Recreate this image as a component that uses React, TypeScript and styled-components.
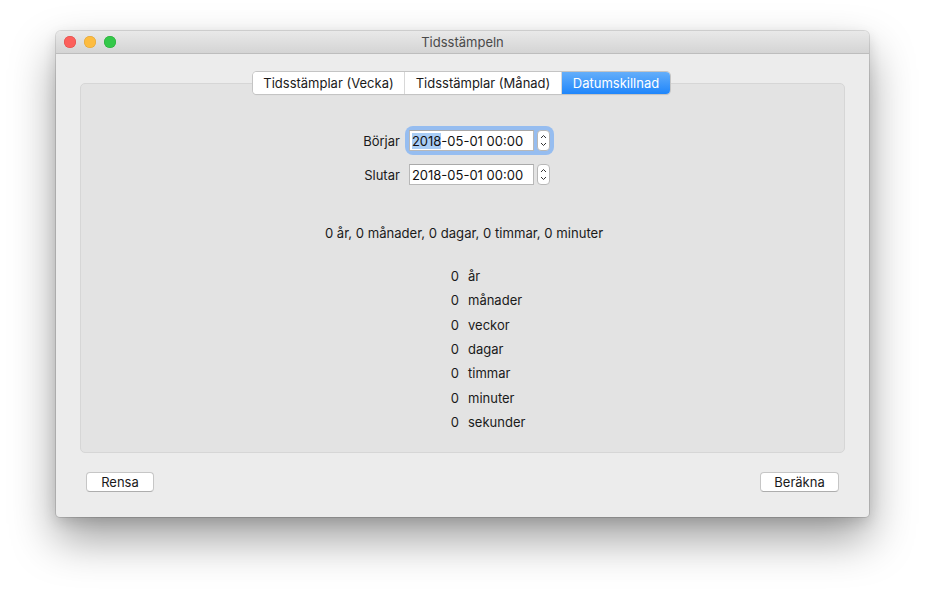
import React from "react";
import styled, { createGlobalStyle } from "styled-components";

const Global = createGlobalStyle`
  html, body { margin: 0; padding: 0; background: #ffffff; }
  body { font-family: Inter, "Liberation Sans", Arial, sans-serif; -webkit-font-smoothing: antialiased; }
  * { box-sizing: border-box; }
`;

const Page = styled.div`
  width: 925px;
  height: 597px;
  padding: 31px 0 0 56px;
  overflow: hidden;
`;

const Window = styled.div`
  width: 813px;
  height: 486px;
  background: #ececec;
  border-radius: 5px 5px 4px 4px;
  box-shadow: 0 0 0 1px rgba(0,0,0,0.12), 0 22px 45px rgba(0,0,0,0.38), 0 5px 14px rgba(0,0,0,0.12);
  display: flex;
  flex-direction: column;
  overflow: hidden;
`;

const TitleBar = styled.div`
  height: 23px;
  flex: none;
  position: relative;
  display: flex;
  align-items: center;
  justify-content: center;
  background: linear-gradient(#e9e9e9, #d4d4d4);
  border-bottom: 1px solid #bdbdbd;
`;

const Lights = styled.div`
  position: absolute;
  left: 8px;
  top: 5px;
  display: flex;
  gap: 8px;
`;

const Light = styled.span<{ $c: string; $b: string }>`
  width: 12px;
  height: 12px;
  border-radius: 50%;
  background: ${(p) => p.$c};
  box-shadow: inset 0 0 0 0.5px ${(p) => p.$b};
`;

const Title = styled.div`
  font-size: 13px;
  color: #4a4a4a;
`;

const Body = styled.div`
  flex: 1;
  display: flex;
  flex-direction: column;
  padding: 18px 24px 0 24px;
`;

const TabBar = styled.div`
  display: flex;
  justify-content: center;
  margin-bottom: -11px;
  position: relative;
  z-index: 1;
  padding-right: 2px;
`;

const Segmented = styled.div`
  display: flex;
  height: 22px;
  border-radius: 4px;
  background: #fff;
  box-shadow: 0 0 0 1px #c4c4c4, 0 1px 1px rgba(0,0,0,0.12);
  overflow: hidden;
`;

const Segment = styled.div<{ $active?: boolean; $w: number }>`
  width: ${(p) => p.$w}px;
  display: flex;
  align-items: center;
  justify-content: center;
  font-size: 13px;
  color: ${(p) => (p.$active ? "#fff" : "#1a1a1a")};
  background: ${(p) => (p.$active ? "linear-gradient(#64aefa, #1f86fb)" : "#fff")};
  & + & { border-left: 1px solid #d8d8d8; }
`;

const Panel = styled.div`
  height: 370px;
  background: #e3e3e3;
  border: 1px solid #d6d6d6;
  border-radius: 5px;
  display: flex;
  flex-direction: column;
  align-items: stretch;
  padding-top: 46px;
`;

const FormWrap = styled.div`
  display: flex;
  justify-content: center;
  padding-right: 12px;
`;

const Form = styled.div`
  display: grid;
  grid-template-columns: auto auto;
  column-gap: 9px;
  row-gap: 13px;
  align-items: center;
`;

const Label = styled.div`
  font-size: 13px;
  color: #1a1a1a;
  text-align: right;
`;

const Picker = styled.div<{ $focus?: boolean }>`
  display: flex;
  gap: 3px;
  border-radius: 4px;
  box-shadow: ${(p) => (p.$focus ? "0 0 0 4px #96bdf0" : "none")};
  background: ${(p) => (p.$focus ? "#96bdf0" : "transparent")};
`;

const Field = styled.div`
  width: 125px;
  height: 21px;
  background: #fff;
  border: 1px solid #b8b8b8;
  border-top-color: #a9a9a9;
  display: flex;
  align-items: center;
  padding-left: 2px;
  font-size: 13px;
  color: #111;
  white-space: nowrap;
`;

const Sel = styled.span`
  background: #a9cdf5;
`;

const Stepper = styled.div`
  width: 13px;
  height: 21px;
  background: #fff;
  border: 1px solid #b8b8b8;
  border-radius: 4px;
  display: flex;
  align-items: center;
  justify-content: center;
`;

const Summary = styled.div`
  margin-top: 40px;
  text-align: center;
  font-size: 13.1px;
  color: #1a1a1a;
  padding-left: 3px;
`;

const List = styled.div`
  margin-top: 23px;
  padding-left: 2px;
  display: grid;
  grid-template-columns: 1fr 1fr;
  column-gap: 9px;
  grid-auto-rows: 24.3px;
  align-items: center;
  font-size: 13px;
  color: #1a1a1a;
`;

const Num = styled.div`
  text-align: right;
`;

const Unit = styled.div`
  text-align: left;
`;

const Footer = styled.div`
  display: flex;
  justify-content: space-between;
  padding: 19px 6px 0 6px;
`;

const Button = styled.div<{ $w: number }>`
  width: ${(p) => p.$w}px;
  height: 20px;
  background: #fff;
  border: 1px solid #c6c6c6;
  border-bottom-color: #adadad;
  border-radius: 4px;
  display: flex;
  align-items: center;
  justify-content: center;
  font-size: 13px;
  color: #1a1a1a;
`;

const StepIcon = () => (
  <svg width="7" height="15" viewBox="0 0 7 15">
    <path d="M1 5 L3.5 2.5 L6 5" fill="none" stroke="#333" strokeWidth="1" />
    <path d="M1 10 L3.5 12.5 L6 10" fill="none" stroke="#333" strokeWidth="1" />
  </svg>
);

const units = ["år", "månader", "veckor", "dagar", "timmar", "minuter", "sekunder"];

export default function App() {
  return (
    <>
      <Global />
      <Page>
        <Window>
          <TitleBar>
            <Lights>
              <Light $c="#fc605c" $b="#de4a45" />
              <Light $c="#fdbc40" $b="#dea236" />
              <Light $c="#34c84a" $b="#27aa35" />
            </Lights>
            <Title>Tidsstämpeln</Title>
          </TitleBar>
          <Body>
            <TabBar>
              <Segmented>
                <Segment $w={151}>Tidsstämplar (Vecka)</Segment>
                <Segment $w={157}>Tidsstämplar (Månad)</Segment>
                <Segment $w={109} $active>Datumskillnad</Segment>
              </Segmented>
            </TabBar>
            <Panel>
              <FormWrap>
                <Form>
                  <Label>Börjar</Label>
                  <Picker $focus>
                    <Field><Sel>2018</Sel>-05-01 00:00</Field>
                    <Stepper><StepIcon /></Stepper>
                  </Picker>
                  <Label>Slutar</Label>
                  <Picker>
                    <Field>2018-05-01 00:00</Field>
                    <Stepper><StepIcon /></Stepper>
                  </Picker>
                </Form>
              </FormWrap>
              <Summary>0 år, 0 månader, 0 dagar, 0 timmar, 0 minuter</Summary>
              <List>
                {units.map((u) => (
                  <React.Fragment key={u}>
                    <Num>0</Num>
                    <Unit>{u}</Unit>
                  </React.Fragment>
                ))}
              </List>
            </Panel>
            <Footer>
              <Button $w={68}>Rensa</Button>
              <Button $w={79}>Beräkna</Button>
            </Footer>
          </Body>
        </Window>
      </Page>
    </>
  );
}
